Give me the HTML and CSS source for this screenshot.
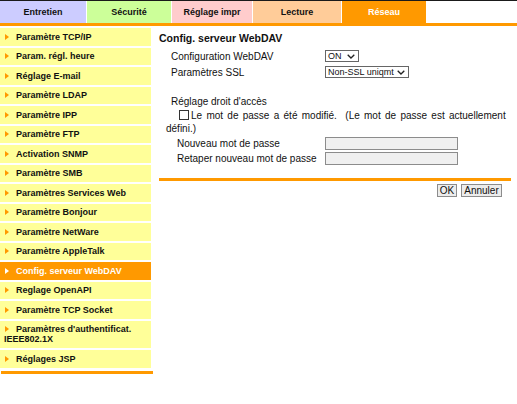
FILE: index.html
```html
<!DOCTYPE html>
<html lang="fr">
<head>
<meta charset="utf-8">
<title>Config. serveur WebDAV</title>
<link rel="stylesheet" href="styles.css">
</head>
<body>
<div class="page">
  <nav class="tabs">
    <div class="tab t-ent">Entretien</div>
    <div class="tab t-sec">Sécurité</div>
    <div class="tab t-reg">Réglage impr</div>
    <div class="tab t-lec">Lecture</div>
    <div class="tab t-res">Réseau</div>
  </nav>
  <div class="bar"></div>
  <div class="main">
    <aside class="side">
      <ul class="menu">
        <li><span class="tri"></span>Paramètre TCP/IP</li>
        <li><span class="tri"></span>Param. régl. heure</li>
        <li><span class="tri"></span>Réglage E-mail</li>
        <li><span class="tri"></span>Paramètre LDAP</li>
        <li><span class="tri"></span>Paramètre IPP</li>
        <li><span class="tri"></span>Paramètre FTP</li>
        <li><span class="tri"></span>Activation SNMP</li>
        <li><span class="tri"></span>Paramètre SMB</li>
        <li><span class="tri"></span>Paramètres Services Web</li>
        <li><span class="tri"></span>Paramètre Bonjour</li>
        <li><span class="tri"></span>Paramètre NetWare</li>
        <li><span class="tri"></span>Paramètre AppleTalk</li>
        <li class="on"><span class="tri"></span>Config. serveur WebDAV</li>
        <li><span class="tri"></span>Reglage OpenAPI</li>
        <li><span class="tri"></span>Paramètre TCP Socket</li>
        <li class="two"><span class="tri"></span>Paramètres d'authentificat.<br>IEEE802.1X</li>
        <li><span class="tri"></span>Réglages JSP</li>
      </ul>
      <div class="side-end"></div>
    </aside>
    <section class="content">
      <h1 class="title">Config. serveur WebDAV</h1>
      <div class="row">
        <span class="lbl">Configuration WebDAV</span>
        <span class="sel sel-on">ON<svg class="chev" width="8" height="5" viewBox="0 0 8 5"><path d="M0.7 0.7 L4 4 L7.3 0.7" fill="none" stroke="#222" stroke-width="1.3"/></svg></span>
      </div>
      <div class="row">
        <span class="lbl">Paramètres SSL</span>
        <span class="sel sel-ssl">Non-SSL uniqmt<svg class="chev" width="8" height="5" viewBox="0 0 8 5"><path d="M0.7 0.7 L4 4 L7.3 0.7" fill="none" stroke="#222" stroke-width="1.3"/></svg></span>
      </div>
      <div class="blank"></div>
      <div class="row">
        <span class="lbl">Réglage droit d'accès</span>
      </div>
      <p class="chk"><span class="box"></span>Le mot de passe a été modifié.&nbsp; (Le mot de passe est actuellement défini.)</p>
      <div class="row row-sub">
        <span class="lbl">Nouveau mot de passe</span>
        <span class="field"></span>
      </div>
      <div class="row row-sub row-last">
        <span class="lbl">Retaper nouveau mot de passe</span>
        <span class="field"></span>
      </div>
      <div class="rule"></div>
      <div class="btns">
        <span class="btn btn-ok">OK</span>
        <span class="btn btn-cancel">Annuler</span>
      </div>
    </section>
  </div>
</div>
</body>
</html>
```
FILE: styles.css
```css
* { box-sizing: border-box; }
html, body { margin: 0; padding: 0; background: #fff; }
body { font-family: "Liberation Sans", Arial, sans-serif; color: #000; }

.page {
  width: 517px;
  height: 404px;
  overflow: hidden;
  border-top: 1px solid #1a1a1a;
}

.tabs { display: flex; gap: 1px; height: 22px; }
.tab {
  height: 22px;
  display: flex;
  align-items: center;
  justify-content: center;
  font-size: 9px;
  font-weight: bold;
  color: #111;
}
.t-ent { width: 86px; background: #ccccff; }
.t-sec { width: 84px; background: #ccff99; }
.t-reg { width: 80px; background: #ffcccc; }
.t-lec { width: 88px; background: #ffcc99; }
.t-res { width: 84px; background: #ff9900; color: #fff; }

.bar { height: 3px; background: #ff9900; }

.main { display: flex; align-items: flex-start; }

.side { width: 153px; flex: none; padding-top: 2px; }
.menu {
  list-style: none;
  margin: 0;
  padding: 0;
  display: flex;
  flex-direction: column;
  gap: 2px;
}
.menu li {
  width: 151px;
  height: 17.5px;
  background: #ffff99;
  font-size: 9px;
  font-weight: bold;
  line-height: 10px;
  padding: 3.75px 2px 0 4px;
  color: #111;
}
.menu li.two { height: 27.5px; }
.menu li.on { background: #ff9900; color: #fff; }
.tri {
  display: inline-block;
  width: 0;
  height: 0;
  border-left: 4px solid #ff9900;
  border-top: 3px solid transparent;
  border-bottom: 3px solid transparent;
  margin: 0 7px 0 1px;
}
.on .tri { border-left-color: #fff; }
.side-end {
  width: 152px;
  height: 3px;
  margin: 3.5px 0 0 1px;
  background: #ff9900;
}

.content {
  flex: 1;
  padding: 5px 6px 0 6px;
  font-size: 10px;
  color: #111;
}
.title {
  margin: 0 0 2px;
  font-size: 10.5px;
  line-height: 15px;
  font-weight: bold;
}
.row {
  display: flex;
  align-items: center;
  height: 16px;
  padding-left: 12px;
}
.lbl { width: 154px; flex: none; }
.row-sub { padding-left: 18px; }
.row-sub .lbl { width: 148px; }
.row-last { height: 15px; }
.blank { height: 13px; }

.sel {
  display: inline-flex;
  align-items: center;
  justify-content: space-between;
  height: 12px;
  border: 1px solid #666;
  background: #fff;
  font-size: 9px;
  line-height: 10px;
  white-space: nowrap;
  padding: 0 3px 0 2px;
}
.sel-on { width: 34px; }
.sel-ssl { width: 84px; }
.chev { display: block; flex: none; }

.chk {
  margin: 0;
  padding-left: 7px;
  text-indent: 13px;
  line-height: 13px;
  word-spacing: 1.5px;
}
.box {
  display: inline-block;
  width: 10px;
  height: 10px;
  border: 1px solid #333;
  background: #fff;
  margin-right: 2px;
  vertical-align: -1px;
}

.field {
  display: block;
  width: 133px;
  height: 13px;
  border: 1px solid #8c8c8c;
  background: #f0f0f0;
}

.rule { height: 3px; background: #ff9900; margin-top: 12px; }

.btns {
  display: flex;
  justify-content: flex-end;
  gap: 4px;
  margin-top: 3px;
  padding-right: 9px;
}
.btn {
  display: flex;
  align-items: center;
  justify-content: center;
  height: 13px;
  border: 1px solid #8c8c8c;
  background: #ececec;
  font-size: 10px;
  color: #111;
}
.btn-ok { width: 20px; }
.btn-cancel { width: 41px; }
```
